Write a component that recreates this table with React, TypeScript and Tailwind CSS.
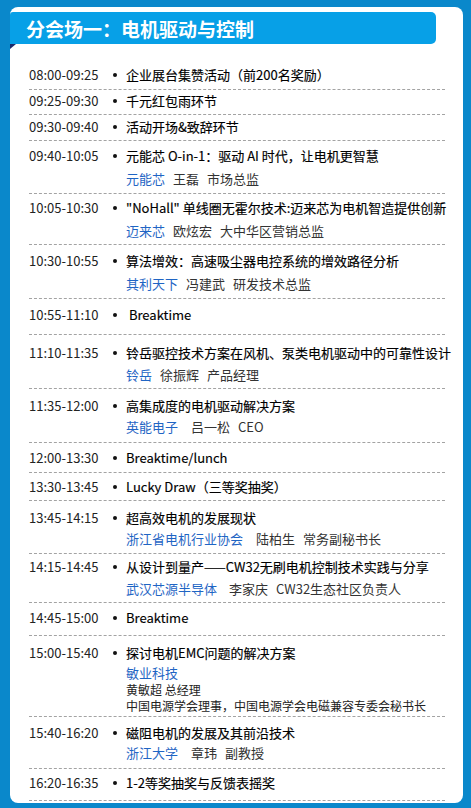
type Sub = { org: string; rest: string[]; gap: string }

type Row = {
  time: string
  title: string
  pad: string
  subGap?: string
  sub?: Sub
  extra?: boolean
}

const rows: Row[] = [
  { time: "08:00-09:25", title: "企业展台集赞活动（前200名奖励）", pad: "pt-[3px] pb-[4px]" },
  { time: "09:25-09:30", title: "千元红包雨环节", pad: "pt-[1px] pb-[3px]" },
  { time: "09:30-09:40", title: "活动开场&致辞环节", pad: "pt-[2px] pb-[3px]" },
  {
    time: "09:40-10:05",
    title: "元能芯 O-in-1：驱动 AI 时代，让电机更智慧",
    pad: "pt-[5px] pb-[4px]",
    subGap: "mt-[3px]",
    sub: { org: "元能芯", rest: ["王磊", "市场总监"], gap: "gap-[8px]" },
  },
  {
    time: "10:05-10:30",
    title: "\"NoHall\" 单线圈无霍尔技术:迈来芯为电机智造提供创新",
    pad: "pt-[4px] pb-[3px]",
    subGap: "mt-[3px]",
    sub: { org: "迈来芯", rest: ["欧炫宏", "大中华区营销总监"], gap: "gap-[8px]" },
  },
  {
    time: "10:30-10:55",
    title: "算法增效：高速吸尘器电控系统的增效路径分析",
    pad: "pt-[6px] pb-[4px]",
    subGap: "mt-[3px]",
    sub: { org: "其利天下", rest: ["冯建武", "研发技术总监"], gap: "gap-[8px]" },
  },
  { time: "10:55-11:10", title: " Breaktime", pad: "pt-[6px] pb-[9px]" },
  {
    time: "11:10-11:35",
    title: "铃岳驱控技术方案在风机、泵类电机驱动中的可靠性设计",
    pad: "pt-[8px] pb-[3px]",
    subGap: "mt-[2px]",
    sub: { org: "铃岳", rest: ["徐振辉", "产品经理"], gap: "gap-[8px]" },
  },
  {
    time: "11:35-12:00",
    title: "高集成度的电机驱动解决方案",
    pad: "pt-[7px] pb-[5px]",
    subGap: "mt-[1px]",
    sub: { org: "英能电子", rest: ["吕一松", "CEO"], gap: "gap-[13px]" },
  },
  { time: "12:00-13:30", title: "Breaktime/lunch", pad: "pt-[5px] pb-[4px]" },
  { time: "13:30-13:45", title: "Lucky Draw（三等奖抽奖）", pad: "pt-[4px] pb-[3px]" },
  {
    time: "13:45-14:15",
    title: "超高效电机的发展现状",
    pad: "pt-[7px] pb-[4px]",
    subGap: "mt-[1px]",
    sub: { org: "浙江省电机行业协会", rest: ["陆柏生", "常务副秘书长"], gap: "gap-[13px]" },
  },
  {
    time: "14:15-14:45",
    title: "从设计到量产——CW32无刷电机控制技术实践与分享",
    pad: "pt-[3px] pb-[3px]",
    subGap: "mt-[2px]",
    sub: { org: "武汉芯源半导体", rest: ["李家庆", "CW32生态社区负责人"], gap: "gap-[12px]" },
  },
  { time: "14:45-15:00", title: "Breaktime", pad: "pt-[5px] pb-[7px]" },
  { time: "15:00-15:40", title: "探讨电机EMC问题的解决方案", pad: "pt-[7px] pb-[2px]", extra: true },
  {
    time: "15:40-16:20",
    title: "磁阻电机的发展及其前沿技术",
    pad: "pt-[6px] pb-[5px]",
    subGap: "mt-0",
    sub: { org: "浙江大学", rest: ["章玮", "副教授"], gap: "gap-[13px]" },
  },
  { time: "16:20-16:35", title: "1-2等奖抽奖与反馈表摇奖", pad: "pt-[4px] pb-[7px]" },
]

function AgendaRow({ row }: { row: Row }) {
  return (
    <div className={`flex border-b border-dashed border-[#a3a3a3] ${row.pad}`}>
      <div className="w-[84px] shrink-0 text-[13px] leading-[20px] text-[#222]">{row.time}</div>
      <div className="w-[13px] shrink-0 h-[20px] flex items-center">
        <span className="block w-[4px] h-[4px] rounded-full bg-[#111]" />
      </div>
      <div className="flex-1 min-w-0">
        <div className="whitespace-pre text-[13px] leading-[20px] text-black [-webkit-text-stroke:0.15px_#000]">
          {row.title}
        </div>
        {row.sub && (
          <div className={`flex ${row.sub.gap} ${row.subGap} text-[13px] leading-[20px] whitespace-nowrap`}>
            <span className="text-[#1f65c4]">{row.sub.org}</span>
            <span className="flex gap-[8px] text-[#333]">
              {row.sub.rest.map((r) => (
                <span key={r}>{r}</span>
              ))}
            </span>
          </div>
        )}
        {row.extra && (
          <div className="whitespace-nowrap">
            <div className="text-[13px] leading-[18px] mt-[1px] text-[#1f65c4]">敏业科技</div>
            <div className="text-[12px] leading-[16px] text-[#222]">黄敏超 总经理</div>
            <div className="text-[12px] leading-[16px] text-[#222]">中国电源学会理事，中国电源学会电磁兼容专委会秘书长</div>
          </div>
        )}
      </div>
    </div>
  )
}

export default function App() {
  return (
    <div
      className="h-[808px] w-[471px] bg-[#0a88cb] pt-[7px] pl-[10px] pr-[8px] overflow-hidden"
      style={{ fontFamily: '"Noto Sans CJK SC", "Noto Sans", sans-serif' }}
    >
      <div className="bg-white rounded-[8px] pt-[5px] pb-[2px]">
        <div className="h-[32px] w-[426px] bg-[#07a0e7] rounded-tl-[3px] rounded-r-[5px] flex items-center pl-[16px]">
          <h1 className="text-[19px] font-bold text-white leading-none">分会场一：电机驱动与控制</h1>
        </div>
        <div className="w-0 h-0 border-t-[5px] border-t-[#1c2a6b] border-r-[6px] border-r-transparent" />
        <div className="mt-[13px] pl-[19px] pr-[18px]">
          {rows.map((row) => (
            <AgendaRow key={row.time} row={row} />
          ))}
        </div>
      </div>
    </div>
  )
}
